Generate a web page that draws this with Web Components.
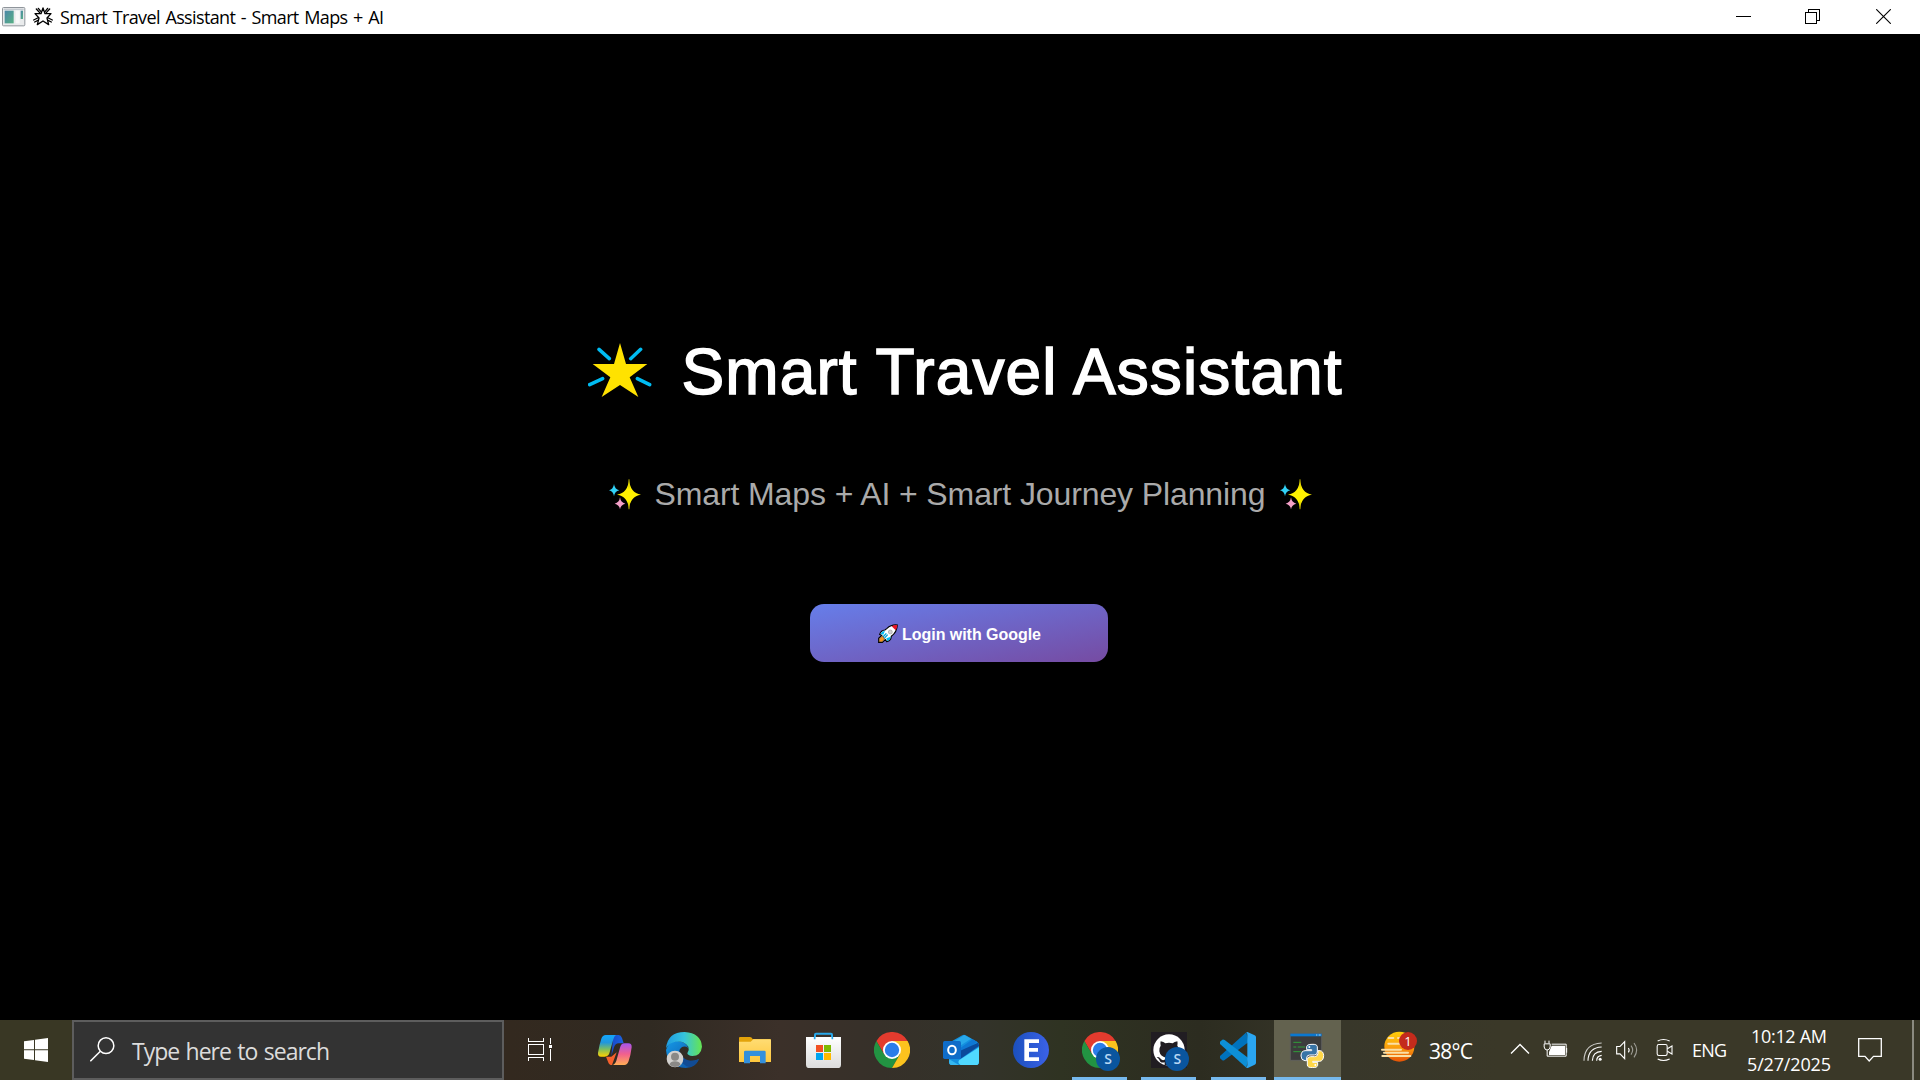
<!DOCTYPE html>
<html lang="en">
<head>
<meta charset="utf-8">
<title>Smart Travel Assistant - Smart Maps + AI</title>
<style>
html,body{margin:0;height:100%;background:#000;overflow:hidden}
</style>
</head>
<body>
<desktop-screen></desktop-screen>
<script>
const ICONS = {
app:`<svg width="24" height="20" viewBox="0 0 72 60"><defs><linearGradient id="g" x1="0" y1="0" x2="1" y2="1"><stop stop-color="#4a86a8"/><stop offset="1" stop-color="#58b184"/></linearGradient></defs><rect x="1.5" y="1.5" width="67" height="55" rx="3" fill="#e9ebec" stroke="#8f959b" stroke-width="3"/><path d="M5 5H65V9H5z" fill="#c3c9cf"/><rect x="8" y="11" width="27" height="38" fill="url(#g)"/><rect x="41" y="11" width="12" height="38" fill="#f8f8f8"/><rect x="56" y="11" width="7" height="25" fill="url(#g)"/></svg>`,
starline:`<svg width="20" height="20" viewBox="0 0 60 60" fill="none" stroke="#000" stroke-width="4" stroke-linejoin="round" stroke-linecap="round"><path d="M30 3L36 20 54 20 42 33 47 53 30 42 13 53 18 33 6 20 24 20z"/><path d="M10 6L20 17M16 4L24 14M50 6L40 17M44 4L36 14M2 39L14 33M5 45L15 40M58 39L46 33M55 45L45 40" stroke-width="4"/></svg>`,
min:`<svg width="15" height="15" viewBox="0 0 15 15"><path d="M0 7.5H15" stroke="#000"/></svg>`,
restore:`<svg width="15" height="15" viewBox="0 0 15 15" fill="none" stroke="#000" shape-rendering="crispEdges"><path d="M.5 3.5H11.5V14.5H.5zM3.5 3.5V.5H14.5V11.5H11.5"/></svg>`,
close:`<svg width="15" height="15" viewBox="0 0 15 15"><path d="M.2 .2L14.8 14.8M14.8 .2L.2 14.8" stroke="#000" stroke-width="1.1"/></svg>`,
star:`<svg width="64" height="56" viewBox="54 66 192 168"><path d="M150 69L168 132H232L179 172 205 231 150 195 95 231 121 172 68 132H132z" fill="#ffe200"/><path d="M87 88L118 116M212 88L182 116M59 194L98 176M202 176L239 194" stroke="#00bcf2" stroke-width="10.500" stroke-linecap="round"/></svg>`,
sparkles:`<svg width="32" height="31" viewBox="111 476 96 93"><path d="M171 477Q174 518 207 523 174 528 171 567 168 528 135 523 168 518 171 477z" fill="#fff100"/><path d="M169.500 477h3V567h-3z" fill="#cdbf00" opacity=".75"/><path d="M171 499Q176 518 193 523 176 528 171 547 166 528 149 523 166 518 171 499z" fill="#fff100"/><path d="M126 491Q128 507 142 509.500 128 512 126 528 124 512 111 509.500 124 507 126 491z" fill="#31d2f7"/><path d="M144 531Q146 547 160 550 146 553 144 567 142 553 128 550 142 547 144 531z" fill="#f4a0c8"/></svg>`,
rocket:`<svg width="20" height="19" viewBox="262 103 60 57"><path d="M320 106Q302 104 289 116L283 121Q271 122 267 134L273 137 264 146V158H275L284 150 288 156Q301 154 302 140 319 127 320 106z" fill="#fff" stroke="#000" stroke-width="3.500"/><path d="M320 106Q311 105 303 110L315 122Q319 115 320 106z" fill="#e81224"/><path d="M283 123Q273 124 269 133L278 135zM300 141L287 146 289 154Q299 152 300 141z" fill="#00bcf2"/><path d="M287 131L277 142M291 135L281 146" stroke="#00a4d8" stroke-width="4"/><circle cx="299" cy="127" r="6" fill="#d0d0d0" stroke="#888" stroke-width="1.500"/><path d="M266 147L275 139 282 148 274 157 265 156z" fill="#f7941d" stroke="#222" stroke-width="1.500"/></svg>`,
win:`<svg width="24" height="24" viewBox="72 84 72 72" fill="#fff"><path d="M72 94L102 90V118H72zM105 89.500L144 84V118H105zM72 121H102V150L72 146zM105 121H144V156L105 151z"/></svg>`,
search:`<svg width="25" height="25" viewBox="269 83 75 75" fill="none" stroke="#fff" stroke-width="4.500"><circle cx="317" cy="109" r="23.500"/><path d="M300 126L270 156"/></svg>`,
tasks:`<svg width="25" height="24" viewBox="112 83 75 72" fill="none" stroke="#fff" stroke-width="3" shape-rendering="crispEdges"><path d="M115.500 84V94.500H160.500V84M115.500 103.500H160.500V133.500H115.500zM115.500 153V142.500H160.500V153M181.500 84V102M181.500 117V153"/><path d="M177 105h9v9h-9z" fill="#fff" stroke="none"/></svg>`,
copilot:`<svg width="36" height="36" viewBox="321 66 108 108"><defs><linearGradient id="a" x1="0" y1="0" x2="0" y2="1"><stop offset=".1" stop-color="#16a3f5"/><stop offset=".35" stop-color="#2196dc"/><stop offset=".65" stop-color="#7bbd61"/><stop offset="1" stop-color="#ffd000"/></linearGradient><linearGradient id="b" x1="0" y1="0" x2="0" y2="1"><stop stop-color="#a655ee"/><stop offset=".5" stop-color="#f2608d"/><stop offset="1" stop-color="#ffae55"/></linearGradient><linearGradient id="c"><stop stop-color="#1849c8"/><stop offset="1" stop-color="#1c64e0"/></linearGradient></defs><path d="M370 75H386Q393 75 396 84L401 100H386Q376 100 372 112L364 138z" fill="url(#c)"/><path d="M348 140H364L380 127 366 165Q357 165 354 155z" fill="#f6602c"/><path d="M347 75H378Q373 78 370 88L359 127Q356 140 344 140H333Q323 140 324 128 328 104 334 86 338 75 347 75z" fill="url(#a)"/><path d="M403 165H366Q375 164 379 152L390 113Q393 100 404 100H415Q426 100 425 112 422 136 416 153 412 165 403 165z" fill="url(#b)"/></svg>`,
edge:`<svg width="36" height="36" viewBox="531 66 108 108"><defs><linearGradient id="a" x1="0" x2="1"><stop stop-color="#1e9be0"/><stop offset=".5" stop-color="#35c3de"/><stop offset=".95" stop-color="#62e25c"/></linearGradient><linearGradient id="b" x1="0" y1="0" x2="1" y2="1"><stop stop-color="#1598e6"/><stop offset="1" stop-color="#0c4fa0"/></linearGradient></defs><path d="M531 120Q538 93 565 93 591 95 598 114 583 104 573 117 565 134 581 147 603 159 630 147 620 172 590 174 535 170 531 120z" fill="url(#b)"/><path d="M573 117Q562 142 581 160 588 168 603 172 621 168 630 148 609 157 590 148 570 137 573 117z" fill="#114b94"/><path d="M531 115Q536 66 587 66 636 69 639 110 636 137 610 138 596 137 595 130 602 120 598 110 586 92 559 95 539 99 531 115z" fill="url(#a)"/><circle cx="558" cy="147" r="25" fill="#d2d0ce"/><circle cx="558" cy="140" r="12" fill="#8a8886"/><path d="M541 164Q545 154 558 154T575 164Q558 178 541 164z" fill="#8a8886"/></svg>`,
folder:`<svg width="36" height="36" viewBox="741 66 108 108"><defs><linearGradient id="a" x1="0" y1="0" x2="0" y2="1"><stop stop-color="#ffdc73"/><stop offset="1" stop-color="#ffc83d"/></linearGradient></defs><path d="M747 84Q747 81 750 81H780Q785 81 788 87H840Q843 87 843 91V156H747z" fill="#e3a30a"/><path d="M747 95H782L790 88H840Q843 88 843 91V156H747z" fill="url(#a)"/><path d="M762 160V126Q762 122 766 122H823Q827 122 827 126V160H810V138H780V160z" fill="#3490dc"/></svg>`,
store:`<svg width="36" height="36" viewBox="48 66 108 108"><defs><linearGradient id="a" x1="0" y1="0" x2="0" y2="1"><stop stop-color="#fff"/><stop offset="1" stop-color="#dcdcdc"/></linearGradient></defs><path d="M75 90V74Q75 71 78 71H123Q126 71 126 74V90" fill="none" stroke="#28a8ea" stroke-width="6"/><path d="M48 81H153V164Q153 174 143 174H58Q48 174 48 164z" fill="url(#a)"/><path d="M74 81V88M127 81V88" stroke="#28a8ea" stroke-width="5"/><path d="M78 105h21v21h-21z" fill="#f25022"/><path d="M102 105h21v21h-21z" fill="#7fba00"/><path d="M78 129h21v21h-21z" fill="#00a4ef"/><path d="M102 129h21v21h-21z" fill="#ffb900"/></svg>`,
chrome:`<svg width="36" height="36" viewBox="-54 -54 108 108"><path d="M-46.800 -27A54 54 0 0 1 46.800 -27H0L-23.400 13.500z" fill="#e33b2e"/><path d="M-46.800 -27A54 54 0 0 0 0 54L23.400 13.500 -23.400 13.500z" fill="#229342"/><path d="M0 54A54 54 0 0 0 46.800 -27H0L23.400 13.500z" fill="#fcc31e"/><circle r="27" fill="#fff"/><circle r="21.500" fill="#2b7de9"/></svg>`,
outlook:`<svg width="36" height="36" viewBox="462 66 108 108"><path d="M480 98L520 76Q525 73 530 76L564 95Q570 99 570 106V155Q570 165 560 165H490Q480 165 480 155z" fill="#1490df"/><path d="M480 104L526 75 546 86 500 116z" fill="#28a8ea"/><path d="M510 117L551 88 565 96 514 130z" fill="#0f78d4"/><path d="M514 122L567 98Q570 102 570 108L514 147z" fill="#0a4a9b"/><path d="M570 112V155Q570 165 560 165H515Q505 160 510 151z" fill="#50d9ff"/><path d="M481 148L510 165H490Q480 165 480 155z" fill="#35b8f1"/><rect x="462" y="93" width="54" height="54" rx="5" fill="#0f6cc8"/><ellipse cx="489" cy="120" rx="11.500" ry="13" fill="none" stroke="#fff" stroke-width="6"/></svg>`,
e:`<svg width="36" height="36" viewBox="669 66 108 108"><defs><linearGradient id="a"><stop stop-color="#1b50bd"/><stop offset="1" stop-color="#3b62e8"/></linearGradient></defs><circle cx="723" cy="120" r="54" fill="url(#a)"/><path d="M703 88H747V99H717V114H744V125H717V142H747V153H703z" fill="#fff"/></svg>`,
github:`<svg width="36" height="36" viewBox="273 66 108 108"><path d="M273 66h108v108H273z" fill="#211d22"/><circle cx="327" cy="120" r="47" fill="#fff"/><path d="M302 94Q311 95 316 100 327 97 338 100 343 95 352 94 354 101 352 107 358 113 356 124 353 140 336 143 341 148 340 166H314V157Q301 160 298 149 295 144 290 142 297 139 302 146 307 153 314 149 315 145 318 143 301 140 298 124 297 113 302 107 300 101 302 94z" fill="#211d22"/></svg>`,
vscode:`<svg width="36" height="36" viewBox="480 66 108 108"><path d="M559 67L480 138Q477 141 480 145L487 151Q490 153 494 150L565 97z" fill="#0072bc"/><path d="M480 102Q477 99 480 95L487 89Q490 87 494 90L565 144 559 173z" fill="#0d8fd6"/><path d="M559 67Q561 65 564 67L584 76Q588 78 588 82V158Q588 162 584 164L565 173Q562 175 558 172 562 171 562 166V74Q562 70 559 67z" fill="#2aa6f2"/></svg>`,
python:`<svg width="36" height="36" viewBox="690 66 108 108"><path d="M694 71h94v80h-94z" fill="#3c3c3c" stroke="#666" stroke-width="2"/><path d="M694 71h94v8h-94z" fill="#0a78d0"/><path d="M771 75h4M779 75h6" stroke="#fff" stroke-width="2"/><path d="M703 97H727M703 111H712M716 111H738M703 125H727" stroke="#2f9e38" stroke-width="3"/><g stroke="#fff" stroke-width="3" stroke-linejoin="round"><path d="M759 103Q774 102 775 110V126Q775 135 766 135H752Q743 135 743 144V152H738Q726 151 726 138 726 123 738 122H758V119H743V110Q744 103 759 103z" fill="#3874a6"/><path d="M761 173Q745 173 745 165V149Q745 140 754 140H767Q777 139 777 130V122H783Q793 123 794 137 793 153 782 154H761V157H776V166Q775 173 761 173z" fill="#ffd748"/></g><circle cx="751" cy="111" r="3" fill="#fff"/><circle cx="769" cy="165" r="3" fill="#fff"/></svg>`,
weather:`<svg width="37" height="32" viewBox="62 64 111 96"><defs><linearGradient id="a" x1="0" y1="0" x2="0" y2="1"><stop stop-color="#ffce0a"/><stop offset=".5" stop-color="#fba10d"/><stop offset="1" stop-color="#e65306"/></linearGradient></defs><circle cx="117" cy="111" r="45" fill="url(#a)"/><path d="M85 85H99M113 85H130M84 102H122M65 120H122M71 129H143M66 139H150" stroke="#fae0a6" stroke-width="6" stroke-linecap="round"/></svg>`,
up:`<svg width="20" height="12" viewBox="0 0 20 12"><path d="M1 10.500L10 1.500 19 10.500" fill="none" stroke="#fff" stroke-width="1.400"/></svg>`,
battery:`<svg width="25" height="18" viewBox="550 91 75 54" fill="none" stroke="#fff" stroke-width="3"><path d="M556 93V101M568 93V101M553.500 102.500H571.500V112Q570 121 562 121 555 121 553.500 112zM562.500 121V139.500H619.500V103.500H576M621 115V129"/><path d="M568 127L576 108H616V136H568z" fill="#fff" stroke="none"/></svg>`,
wifi:`<svg width="19" height="19" viewBox="670 94 57 57" fill="none" stroke="#fff" stroke-width="3.300"><path d="M673 150Q674 99 726 97" opacity=".75"/><path d="M685 150Q686 111 726 109M698 150Q699 123 726 122M711 150Q711 136 726 134"/><circle cx="721.500" cy="146" r="4.500" fill="#fff" stroke="none"/></svg>`,
volume:`<svg width="23" height="20" viewBox="770 90 69 60" fill="none" stroke="#fff" stroke-width="3.400"><path d="M772 109.500H782L796 95V146L782 131.500H772z"/><path d="M807 114Q812 120 807 127"/><path d="M815 107Q825 120 815 134M824 99Q840 120 824 142" opacity=".5"/></svg>`,
cam:`<svg width="18" height="24" viewBox="49 84 54 72" fill="none" stroke="#fff" stroke-width="3.200"><path d="M54 93Q71 84 90 93M54 147Q71 156 90 147"/><rect x="52.500" y="103.500" width="30" height="33" rx="5"/><path d="M83 116L97 108V132L83 124"/></svg>`,
notif:`<svg width="24" height="25" viewBox="0 0 24 25"><path d="M.7 .7H23.300V18.300H15.500L11.200 23 7 18.300H.7z" fill="none" stroke="#fff" stroke-width="1.300"/></svg>`
};

class UiIcon extends HTMLElement {
  connectedCallback(){
    if(this.shadowRoot) return;
    this.attachShadow({mode:'open'}).innerHTML =
      `<style>:host{display:block;flex:none}svg{display:block}</style>${ICONS[this.getAttribute('name')]}`;
  }
}
customElements.define('ui-icon', UiIcon);

/* Single-line label whose tracking is set so that it spans the width in "w". */
class FitText extends HTMLElement {
  connectedCallback(){
    if(this.shadowRoot) return;
    const w = +this.getAttribute('w'), s = this.getAttribute('size');
    const root = this.attachShadow({mode:'open'});
    root.innerHTML = `<style>:host{display:block;flex:none;width:${w}px;font-size:${s}px;white-space:nowrap}
      span{display:inline-block;line-height:inherit}</style><span><slot></slot></span>`;
    const span = root.querySelector('span');
    const n = this.textContent.length - 1;
    span.style.letterSpacing = ((w - span.getBoundingClientRect().width) / n).toFixed(3) + 'px';
  }
}
customElements.define('fit-text', FitText);

const define = (name, html) => customElements.define(name, class extends HTMLElement {
  constructor(){ super(); this.attachShadow({mode:'open'}).innerHTML = html; }
});

define('title-bar', `<style>
:host{display:flex;height:34px;align-items:center;background:#fff;color:#000;font-family:"Open Sans","Noto Sans",sans-serif;line-height:34px;box-sizing:border-box;padding:0 29px 0 2px}
.t{margin-left:7px;word-spacing:1.5px}.s{margin-left:7px}
.b{display:flex;margin-left:auto;gap:54px;padding-bottom:1px}
.b ui-icon:last-child{margin-left:2px}
</style><ui-icon name="app"></ui-icon><ui-icon class="s" name="starline"></ui-icon>
<fit-text class="t" w="324" size="18">Smart Travel Assistant - Smart Maps + AI</fit-text>
<div class="b"><ui-icon name="min"></ui-icon><ui-icon name="restore"></ui-icon><ui-icon name="close"></ui-icon></div>`);

define('login-button', `<style>
:host{display:flex;align-items:center;justify-content:center;width:298px;height:58px;border-radius:14px;background:linear-gradient(to bottom right,#667eea,#764ba2);color:#fff;font-weight:bold;gap:4px;line-height:20px}
ui-icon{margin-left:1px}
.l{margin-top:3px}
</style><ui-icon name="rocket"></ui-icon><fit-text class="l" w="139" size="16"><slot></slot></fit-text>`);

define('welcome-view', `<style>
:host{display:flex;flex-direction:column;align-items:center;flex:1;background:#000;font-family:"Liberation Sans",Arial,sans-serif;box-sizing:border-box;padding-top:298px}
.h{display:flex;align-items:center;height:80px;line-height:80px;color:#fff;gap:30px;margin-left:9px}
.h fit-text{-webkit-text-stroke:1.5px #fff}
.h ui-icon{margin-top:-4px}
.p{display:flex;align-items:center;height:40px;line-height:40px;color:#aaa;gap:14px;margin-top:62px}
login-button{margin:90px 2px 0 0}
</style>
<div class="h"><ui-icon name="star"></ui-icon><fit-text w="660" size="64">Smart Travel Assistant</fit-text></div>
<div class="p"><ui-icon name="sparkles"></ui-icon><fit-text w="611" size="32">Smart Maps + AI + Smart Journey Planning</fit-text><ui-icon name="sparkles"></ui-icon></div>
<login-button></login-button>`);

define('profile-badge', `<style>:host{display:flex;width:24px;height:24px;border-radius:50%;background:#0a559e;color:#b8d7f3;font:600 14px/24px "Open Sans",sans-serif;justify-content:center}</style><slot></slot>`);

define('task-item', `<style>
:host{display:flex;position:relative;width:67px;height:60px;align-items:center;justify-content:center;flex:none}
:host([open])::after{content:"";position:absolute;left:6px;right:6px;bottom:0;height:3px;background:#76b9ed}
:host([active]){background:#63624f}
:host([active])::after{left:0;right:0}
::slotted(profile-badge){position:absolute;left:30px;top:27px}
</style><slot></slot>`);

define('task-bar', `<style>
:host{display:flex;height:60px;background:linear-gradient(90deg,#393724 0,#393724 70px,#33291f 510px,#302a22 650px,#3b3029 780px,#363029 880px,#33332a 980px,#2f3322 1060px,#2c2c20 1200px,#38372a 1345px,#3a3828 1500px,#3a3828);color:#fff;font-family:"Open Sans","Noto Sans",sans-serif}
.start{display:flex;width:72px;align-items:center;justify-content:center}
.search{display:flex;box-sizing:border-box;width:432px;border:2px solid #5d5d5d;background:#333;align-items:center;padding-left:16px;gap:17px;color:#dcdcdc;line-height:30px}
.search ui-icon{margin-top:-1px}.search fit-text{margin-top:2px;word-spacing:1.5px}
.tv{display:flex;align-items:center;margin-left:23px;width:54px}
.apps{display:flex;justify-content:space-between;width:760px}
.r{margin-left:1px}
.tray{display:flex;align-items:center;flex:1;line-height:24px}
.w{position:relative;margin:-6px 0 0 40px}
.n{position:absolute;left:18px;top:1px;width:18px;height:18px;border-radius:50%;background:#c42b1c;font-size:13px;line-height:18px;text-align:center}
.clock{display:flex;flex-direction:column;align-items:center;margin-left:20px;gap:4px}
.clock fit-text{line-height:24px}
.end{width:2px;height:60px;background:#8b8a80;margin-left:30px}
</style>
<div class="start"><ui-icon name="win"></ui-icon></div>
<div class="search"><ui-icon name="search"></ui-icon><fit-text w="198" size="23">Type here to search</fit-text></div>
<div class="tv"><ui-icon name="tasks"></ui-icon></div>
<div class="apps">
<task-item><ui-icon name="copilot"></ui-icon></task-item>
<task-item><ui-icon class="r" name="edge"></ui-icon></task-item>
<task-item><ui-icon class="r" style="margin-left:3px" name="folder"></ui-icon></task-item>
<task-item><ui-icon class="r" style="margin-left:3px" name="store"></ui-icon></task-item>
<task-item><ui-icon class="r" name="chrome"></ui-icon></task-item>
<task-item><ui-icon class="r" name="outlook"></ui-icon></task-item>
<task-item><ui-icon class="r" name="e"></ui-icon></task-item>
<task-item open><ui-icon name="chrome"></ui-icon><profile-badge>S</profile-badge></task-item>
<task-item open><ui-icon name="github"></ui-icon><profile-badge>S</profile-badge></task-item>
<task-item open><ui-icon name="vscode"></ui-icon></task-item>
<task-item open active><ui-icon name="python"></ui-icon></task-item>
</div>
<div class="tray">
<div class="w"><ui-icon name="weather"></ui-icon><div class="n">1</div></div>
<fit-text style="margin:2px 0 0 11px" w="44" size="21">38°C</fit-text>
<ui-icon style="margin:-2px 0 0 37px" name="up"></ui-icon>
<ui-icon style="margin:-2px 0 0 13px" name="battery"></ui-icon>
<ui-icon style="margin:2px 0 0 15px" name="wifi"></ui-icon>
<ui-icon style="margin-left:14px" name="volume"></ui-icon>
<ui-icon style="margin-left:17px" name="cam"></ui-icon>
<fit-text style="margin:0 0 0 18px" w="35" size="18">ENG</fit-text>
<div class="clock"><fit-text w="76" size="18">10:12 AM</fit-text><fit-text w="84" size="18">5/27/2025</fit-text></div>
<ui-icon style="margin:1px 0 0 27px" name="notif"></ui-icon>
<div class="end"></div>
</div>`);

define('desktop-screen', `<style>:host{display:flex;flex-direction:column;width:1920px;height:1080px}
title-bar,task-bar{flex:none}</style><title-bar></title-bar><welcome-view></welcome-view><task-bar></task-bar>`);

/* The button's caption comes in through its slot. */
const view = document.querySelector('desktop-screen').shadowRoot.querySelector('welcome-view').shadowRoot;
const button = view.querySelector('login-button');
button.textContent = 'Login with Google';
const caption = button.shadowRoot.querySelector('fit-text').shadowRoot.querySelector('span');
caption.style.letterSpacing = '0';
caption.style.letterSpacing = ((139 - caption.getBoundingClientRect().width) / 16).toFixed(3) + 'px';
</script>
</body>
</html>
